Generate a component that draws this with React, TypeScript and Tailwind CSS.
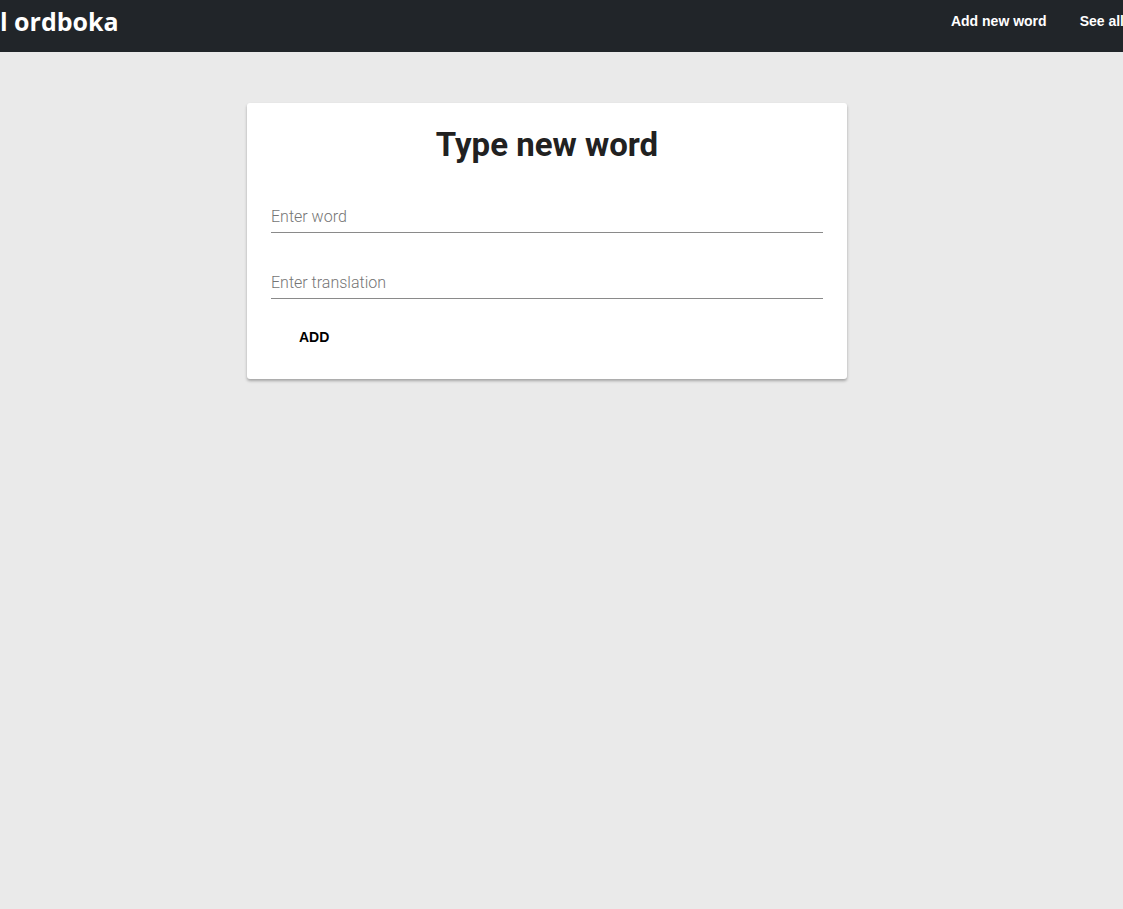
const App = () => {
  return (
    <div className="min-h-[909px] bg-[#eaeaea]">
      <header className="h-[52px] bg-[#212529] flex items-center overflow-hidden">
        <span className="text-white text-[25px] font-bold font-['Open_Sans',sans-serif] whitespace-nowrap leading-none mt-[-10px]">
          l ordboka
        </span>
        <nav className="ml-auto flex items-center gap-[33px] mr-[-1px] mt-[-10px] shrink-0">
          <a href="#add" className="text-white text-[14px] font-bold font-['Liberation_Sans',Arial,sans-serif] whitespace-nowrap">
            Add new word
          </a>
          <a href="#all" className="text-white text-[14px] font-bold font-['Liberation_Sans',Arial,sans-serif] whitespace-nowrap">
            See all
          </a>
        </nav>
      </header>

      <main className="flex justify-center pt-[51px]">
        <div className="w-[600px] bg-white rounded-[3px] shadow-[0_2px_3px_rgba(0,0,0,0.3)] px-6 pt-[24px] pb-[27px] ml-[-29px]">
          <h1 className="text-center text-[33px] font-bold text-[#212121] font-['Roboto',sans-serif] leading-[36px]">
            Type new word
          </h1>
          <div className="mt-[37px] flex flex-col">
            <input
              placeholder="Enter word"
              className="h-[33px] border-b border-[#8a8a8a] outline-none text-[16px] font-['Roboto',sans-serif] font-light placeholder:text-[#757575] text-[#212121]"
            />
            <input
              placeholder="Enter translation"
              className="mt-[33px] h-[33px] border-b border-[#8a8a8a] outline-none text-[16px] font-['Roboto',sans-serif] font-light placeholder:text-[#757575] text-[#212121]"
            />
          </div>
          <div className="mt-[23px] pl-[28px]">
            <button className="text-[14px] font-bold text-black font-['Liberation_Sans',Arial,sans-serif] leading-[30px]">
              ADD
            </button>
          </div>
        </div>
      </main>
    </div>
  );
};

export default App;
